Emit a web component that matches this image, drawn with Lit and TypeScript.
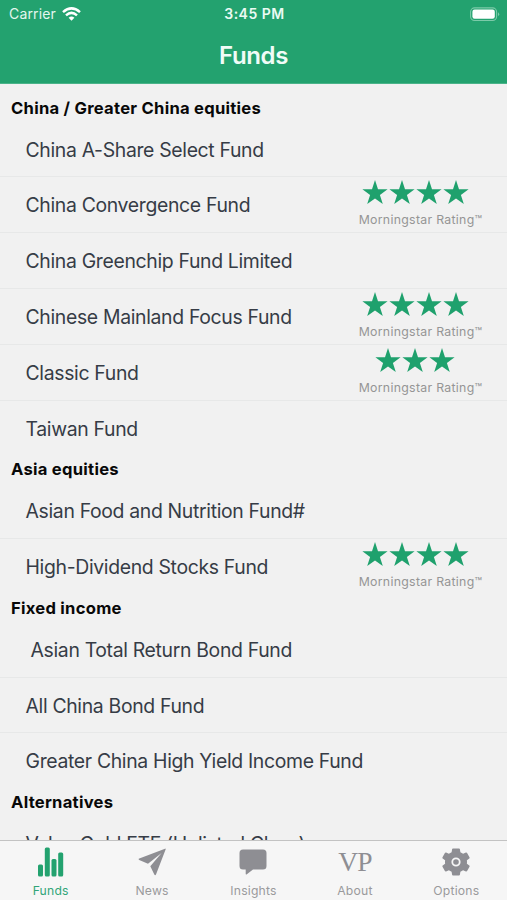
import { LitElement, html, css, svg } from "lit";
import { customElement } from "lit/decorators.js";

interface Fund { name: string; stars?: number; indent?: boolean }
interface Section { title: string; funds: Fund[] }

const SECTIONS: Section[] = [
  { title: "China / Greater China equities", funds: [
    { name: "China A-Share Select Fund" },
    { name: "China Convergence Fund", stars: 4 },
    { name: "China Greenchip Fund Limited" },
    { name: "Chinese Mainland Focus Fund", stars: 4 },
    { name: "Classic Fund", stars: 3 },
    { name: "Taiwan Fund" },
  ] },
  { title: "Asia equities", funds: [
    { name: "Asian Food and Nutrition Fund#" },
    { name: "High-Dividend Stocks Fund", stars: 4 },
  ] },
  { title: "Fixed income", funds: [
    { name: "Asian Total Return Bond Fund", indent: true },
    { name: "All China Bond Fund" },
    { name: "Greater China High Yield Income Fund" },
  ] },
  { title: "Alternatives", funds: [{ name: "Value Gold ETF (Unlisted Class)" }] },
];

const star = svg`<path d="M13 0 L16 9.2 L25.6 9.2 L17.9 14.9 L20.8 24 L13 18.4 L5.2 24 L8.1 14.9 L.4 9.2 L10 9.2 Z"/>`;

@customElement("app-root")
export class AppRoot extends LitElement {
  static styles = css`
    :host { display: flex; flex-direction: column; width: 507px; height: 900px; overflow: hidden; background: #f1f1f1; font-family: Inter, "Liberation Sans", sans-serif; }
    svg { display: block; }
    .top { flex: none; height: 84px; box-sizing: border-box; background: #23a26f; color: #fff; border-bottom: 1px solid #4ab389; }
    .status { display: grid; grid-template-columns: 1fr auto 1fr; align-items: center; height: 27px; padding: 0 7px 0 9px; font-size: 14px; line-height: 28px; }
    .carrier { display: flex; align-items: center; gap: 6px; color: #e3f6ee; letter-spacing: .15px; }
    .time { font-weight: 600; font-size: 14px; letter-spacing: .5px; color: #eafaf3; }
    .battery { justify-self: end; }
    .title { margin: 0; text-align: center; font-size: 24px; font-weight: 600; line-height: 58px; letter-spacing: -.4px; color: #f0fcf7; }
    .list { flex: 1; min-height: 0; overflow: hidden; padding-top: 10.8px; }
    .section { margin: 0; height: 26.9px; line-height: 27px; padding-left: 11px; font-size: 16.6px; font-weight: 650; color: #080808; letter-spacing: .26px; }
    .row { display: flex; justify-content: space-between; height: 55.8px; box-sizing: border-box; border-bottom: 1px solid #e7e8e8; padding: 0 24.5px 0 25.5px; }
    .row.last { border-bottom-color: transparent; }
    .name { font-size: 19.4px; line-height: 57px; color: #363c46; white-space: nowrap; letter-spacing: -.33px; }
    .indent { padding-left: 5px; }
    .rating { display: flex; flex-direction: column; align-items: center; padding-top: 2.800px; width: 124px; }
    .stars { display: flex; gap: 1px; fill: #1fa16d; margin-right: 11px; }
    .caption { font-size: 12.3px; line-height: 16px; margin-top: 7.200px; color: #959595; white-space: nowrap; letter-spacing: .3px; }
    .tabs { flex: none; display: grid; grid-template-columns: repeat(5, 1fr); height: 60px; box-sizing: border-box; border-top: 1px solid #c3c3c3; background: #f6f6f6; color: #8e8e93; fill: #8e8e93; }
    .tab { display: flex; flex-direction: column; align-items: center; }
    .active { color: #31a579; fill: #23a26f; }
    .icon { height: 41px; display: flex; align-items: center; }
    .label { font-size: 12.2px; line-height: 16px; margin-top: 1px; letter-spacing: .2px; }
    .tab:not(.active) .label { color: #9a9a9c; }
    .vp { font-family: "Liberation Serif", serif; font-size: 27.5px; line-height: 41px; letter-spacing: -1px; }
  `;

  private rating(n: number) {
    return html`<div class="rating">
      <div class="stars">${Array.from({ length: n }, () => html`<svg width="26" height="25" viewBox="0 0 26 25">${star}</svg>`)}</div>
      <div class="caption">Morningstar Rating™</div>
    </div>`;
  }

  private tab(label: string, icon: unknown, active = false) {
    return html`<div class="tab ${active ? "active" : ""}"><div class="icon">${icon}</div><div class="label">${label}</div></div>`;
  }

  render() {
    return html`
      <header class="top">
        <div class="status">
          <div class="carrier"><span>Carrier</span>
            <svg width="19" height="14" viewBox="0 0 19 14" fill="none" stroke="#fff" stroke-width="2.5"><path d="M1 5.1 Q9.5 -2.3 18 5.1M4 8.4 Q9.5 3.4 15 8.4"/><path d="M6.6 10.8 Q9.5 8.3 12.4 10.8 L9.5 13.7Z" fill="#fff" stroke="none"/></svg>
          </div>
          <div class="time">3:45 PM</div>
          <svg class="battery" width="30" height="15" viewBox="0 0 30 15"><rect x=".6" y=".9" width="26" height="12.6" rx="4" fill="none" stroke="#7ccaa9" stroke-width="1.1"/><rect x="2.4" y="2.6" width="22.4" height="9.2" rx="2.2" fill="#fff"/><path d="M28 5.2 Q30.4 7.2 28 9.2Z" fill="#7ccaa9"/></svg>
        </div>
        <h1 class="title">Funds</h1>
      </header>
      <main class="list">
        ${SECTIONS.map((s) => html`<h2 class="section">${s.title}</h2>
          ${s.funds.map((f, i) => html`<div class="row ${i === s.funds.length - 1 ? "last" : ""}">
            <span class="name ${f.indent ? "indent" : ""}">${f.name}</span>${f.stars ? this.rating(f.stars) : ""}
          </div>`)}`)}
      </main>
      <nav class="tabs">
        ${this.tab("Funds", html`<svg width="26" height="30" viewBox="0 0 26 30"><rect x="0" y="17.5" width="5" height="12" rx="1.5"/><rect x="6.8" y=".5" width="5" height="29" rx="1.5"/><rect x="13.5" y="12" width="5" height="17.5" rx="1.5"/><rect x="20.2" y="5.5" width="5" height="24" rx="1.5"/></svg>`, true)}
        ${this.tab("News", html`<svg width="28" height="28" viewBox="0 0 28 28"><path d="M27 .7 Q28 .3 27.6 1.5 L18 26.6 Q17.2 28 16.3 26.5 L12.3 18.2 L23.6 5 L10 15.8 L1.2 12 Q-.1 11.2 1.3 10.5Z"/></svg>`)}
        ${this.tab("Insights", html`<svg width="28" height="26" viewBox="0 0 28 26"><path d="M4 .5H24Q27.5 .5 27.5 4V17Q27.5 20.5 24 20.5H14L7.5 25.4Q6.7 25.8 6.7 24.7V20.5H4Q.5 20.5 .5 17V4Q.5 .5 4 .5Z"/></svg>`)}
        ${this.tab("About", html`<span class="vp">VP</span>`)}
        ${this.tab("Options", html`<svg width="28" height="28" viewBox="0 0 28 28"><path fill-rule="evenodd" d="M11 .5h6q.8 0 .9.8l.5 3q1.4.6 2.7 1.5l2.8-1.2q.8-.3 1.2.4l2.4 4.2q.4.7-.2 1.2l-2.4 1.9q.2 1.7 0 3.4l2.4 1.9q.6.5.2 1.2l-2.4 4.2q-.4.7-1.2.4l-2.8-1.2q-1.3.9-2.7 1.5l-.5 3q-.1.8-.9.8h-6q-.8 0-.9-.8l-.5-3q-1.4-.6-2.7-1.5l-2.8 1.2q-.8.3-1.2-.4l-2.4-4.2q-.4-.7.2-1.2l2.4-1.9q-.2-1.7 0-3.4L.7 10.4q-.6-.5-.2-1.2l2.4-4.2q.4-.7 1.2-.4l2.8 1.2q1.3-.9 2.7-1.5l.5-3q.1-.8.9-.8ZM14 9.4a4.6 4.6 0 1 0 0 9.2a4.6 4.6 0 1 0 0-9.2Z"/><circle cx="14" cy="14" r="2.8"/></svg>`)}
      </nav>`;
  }
}
